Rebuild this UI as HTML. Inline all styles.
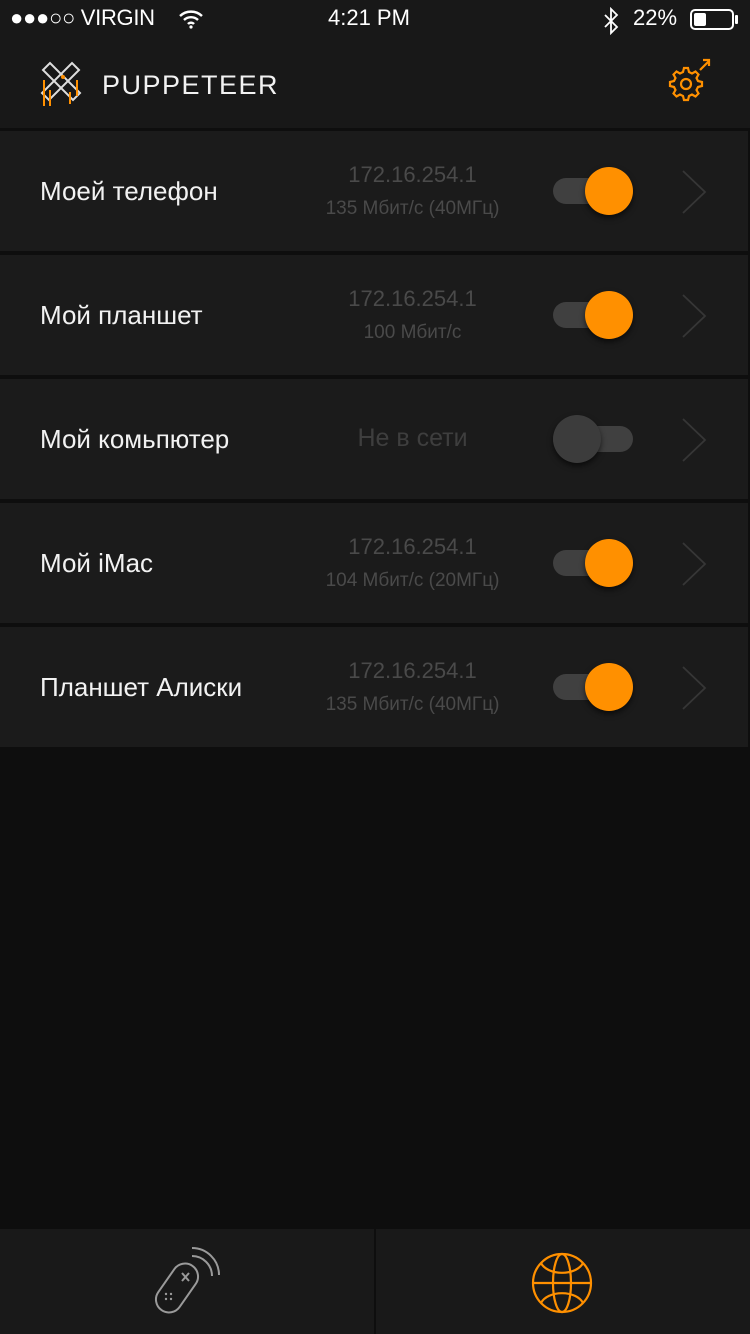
<!DOCTYPE html>
<html><head><meta charset="utf-8"><style>
*{margin:0;padding:0;box-sizing:border-box}
body{width:750px;height:1334px;background:#0e0e0e;font-family:"Liberation Sans",sans-serif;position:relative;overflow:hidden;color:#fff}
.hdr{position:absolute;left:0;top:0;width:750px;height:128px;background:#181818}
.sb{position:absolute;top:5px;font-size:22px;color:#fff}
.row{position:absolute;left:0;width:748px;height:120px;background:#1b1b1b}
.name{position:absolute;left:40px;top:0;line-height:120px;font-size:26px;color:#f2f2f2}
.ip{position:absolute;left:300px;width:225px;text-align:center;color:#4a4a4a}
.ip .a{position:absolute;top:31px;width:100%;font-size:22px}
.ip .b{position:absolute;top:67px;width:100%;font-size:19px}
.ip .c{position:absolute;top:45px;width:100%;font-size:25px;color:#3e3e3e}
.trk{position:absolute;left:553px;top:47px;width:80px;height:26px;border-radius:13px;background:#404040}
.knob{position:absolute;top:36px;width:48px;height:48px;border-radius:50%;background:#ff9000;box-shadow:0 3px 6px rgba(0,0,0,.6)}
.chev{position:absolute;left:680px;top:38px}
.bb{position:absolute;top:1229px;height:105px;background:#191919}
</style></head><body>
<div class="hdr"></div>
<div class="sb" style="left:10px;letter-spacing:-0.3px">●●●○○ VIRGIN</div>
<svg style="position:absolute;left:178px;top:9px" width="26" height="20" viewBox="0 0 26 20"><path d="M2 7a16 16 0 0 1 22 0M6 11a10 10 0 0 1 14 0M10 15a4 4 0 0 1 6 0" stroke="#fff" stroke-width="2.4" fill="none"/><circle cx="13" cy="18" r="1.6" fill="#fff"/></svg>
<div class="sb" style="left:328px">4:21 PM</div>
<svg style="position:absolute;left:602px;top:7px" width="18" height="28" viewBox="0 0 18 28"><path d="M3 8l12 12-6 6V2l6 6L3 20" stroke="#fff" stroke-width="1.8" fill="none"/></svg>
<div class="sb" style="left:633px">22%</div>
<div style="position:absolute;left:690px;top:9px;width:44px;height:21px;border:2px solid #fff;border-radius:5px"><div style="margin:2px;width:12px;height:13px;background:#fff;border-radius:2px"></div></div>
<div style="position:absolute;left:735px;top:15px;width:3px;height:9px;background:#fff;border-radius:1px"></div>
<svg style="position:absolute;left:40px;top:60px" width="42" height="48" viewBox="0 0 42 48"><g stroke="#ddd" stroke-width="2" fill="none"><path d="M3 10l7-7 30 30-7 7z"/><path d="M39 10l-7-7L2 33l7 7z"/></g><circle cx="23" cy="17" r="2" fill="#ff9000"/><g stroke="#ff9000" stroke-width="2"><path d="M4 20v26M10 30v16M30 32v12M37 20v16"/></g></svg>
<div style="position:absolute;left:102px;top:70px;font-size:27px;letter-spacing:1.5px;color:#f2f2f2">PUPPETEER</div>
<svg style="position:absolute;left:664px;top:56px" width="50" height="46" viewBox="0 0 50 46"><g fill="none" stroke="#ff9000" stroke-width="2.2"><path d="M20 12h4l1 4 3 1.5 3.5-2 3 3-2 3.5 1.5 3 4 1v4l-4 1-1.5 3 2 3.5-3 3-3.5-2-3 1.5-1 4h-4l-1-4-3-1.5-3.5 2-3-3 2-3.5-1.5-3-4-1v-4l4-1 1.5-3-2-3.5 3-3 3.5 2 3-1.5z"/><circle cx="22" cy="28" r="5"/><path d="M36 14l9-9M39 4h6v6"/></g></svg>

<div class="row" style="top:131px"><div class="name">Моей телефон</div><div class="ip"><div class="a">172.16.254.1</div><div class="b">135 Мбит/с (40МГц)</div></div><div class="trk"></div><div class="knob" style="left:585px"></div><svg class="chev" width="30" height="46"><path d="M3 2l22 21L3 44" stroke="#363636" stroke-width="1.8" fill="none"/></svg></div>
<div class="row" style="top:255px"><div class="name">Мой планшет</div><div class="ip"><div class="a">172.16.254.1</div><div class="b">100 Мбит/с</div></div><div class="trk"></div><div class="knob" style="left:585px"></div><svg class="chev" width="30" height="46"><path d="M3 2l22 21L3 44" stroke="#363636" stroke-width="1.8" fill="none"/></svg></div>
<div class="row" style="top:379px"><div class="name">Мой комьпютер</div><div class="ip"><div class="c">Не в сети</div></div><div class="trk"></div><div class="knob" style="left:553px;background:#3c3c3c"></div><svg class="chev" width="30" height="46"><path d="M3 2l22 21L3 44" stroke="#363636" stroke-width="1.8" fill="none"/></svg></div>
<div class="row" style="top:503px"><div class="name">Мой iMac</div><div class="ip"><div class="a">172.16.254.1</div><div class="b">104 Мбит/с (20МГц)</div></div><div class="trk"></div><div class="knob" style="left:585px"></div><svg class="chev" width="30" height="46"><path d="M3 2l22 21L3 44" stroke="#363636" stroke-width="1.8" fill="none"/></svg></div>
<div class="row" style="top:627px"><div class="name">Планшет Алиски</div><div class="ip"><div class="a">172.16.254.1</div><div class="b">135 Мбит/с (40МГц)</div></div><div class="trk"></div><div class="knob" style="left:585px"></div><svg class="chev" width="30" height="46"><path d="M3 2l22 21L3 44" stroke="#363636" stroke-width="1.8" fill="none"/></svg></div>

<div class="bb" style="left:0;width:374px"></div>
<div class="bb" style="left:376px;width:374px"></div>
<svg style="position:absolute;left:150px;top:1244px" width="74" height="70" viewBox="0 0 74 70"><g fill="none" stroke="#9a9a9a" stroke-width="2"><rect x="14" y="17" width="26" height="54" rx="13" transform="rotate(35 27 44)"/><path d="M32 29l7 8M39 29l-7 8"/><path d="M42 4A27 27 0 0 1 69 31M42 12A20 20 0 0 1 62 32"/></g><g fill="#9a9a9a"><circle cx="16" cy="50" r="1.2"/><circle cx="21" cy="50" r="1.2"/><circle cx="16" cy="55" r="1.2"/><circle cx="21" cy="55" r="1.2"/></g></svg>
<svg style="position:absolute;left:528px;top:1250px" width="68" height="66" viewBox="0 0 68 66"><g fill="none" stroke="#ff9000" stroke-width="2.2"><ellipse cx="34" cy="33" rx="29" ry="29"/><ellipse cx="34" cy="33" rx="9" ry="29"/><path d="M5 33h58M13 13a22 14 0 0 0 42 0M13 53a22 14 0 0 1 42 0"/></g></svg>
</body></html>
